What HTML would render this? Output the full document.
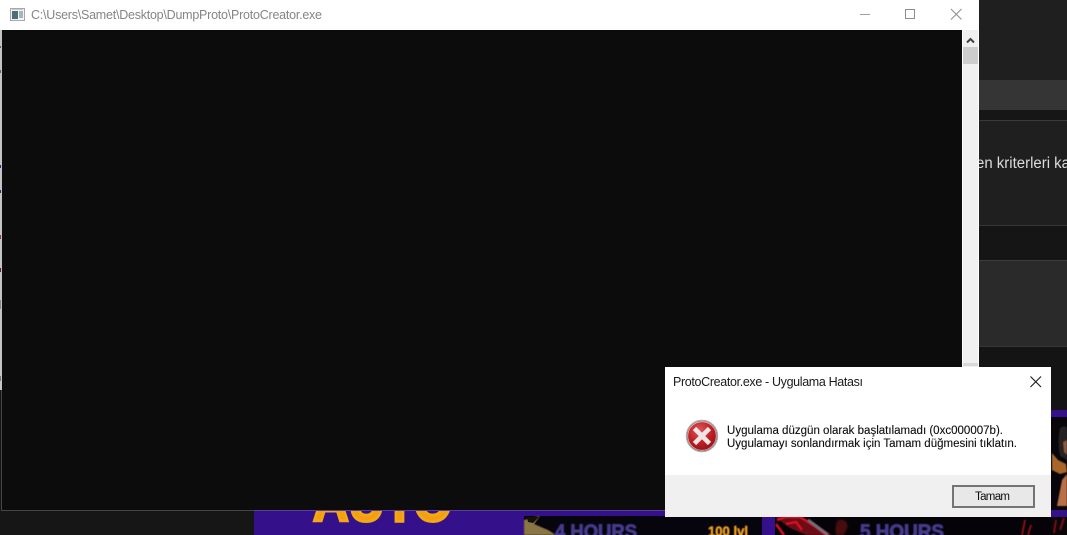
<!DOCTYPE html>
<html><head><meta charset="utf-8">
<style>
html,body{margin:0;padding:0;background:#161616;width:1067px;height:535px;overflow:hidden}
svg{display:block;position:absolute;left:0;top:0}
text{font-family:"Liberation Sans",sans-serif}
</style></head>
<body>
<svg width="1067" height="535" viewBox="0 0 1067 535" xmlns="http://www.w3.org/2000/svg">
<defs>
<radialGradient id="rd" cx="0.42" cy="0.32" r="0.75">
<stop offset="0" stop-color="#dc5a5a"/><stop offset="0.5" stop-color="#bf2226"/><stop offset="1" stop-color="#860f14"/>
</radialGradient>
<linearGradient id="gold" x1="0" y1="0" x2="0" y2="1"><stop offset="0" stop-color="#f5b014"/><stop offset="1" stop-color="#f09a10"/></linearGradient>
<filter id="b"><feGaussianBlur stdDeviation="0.5"/></filter>
<filter id="b1"><feGaussianBlur stdDeviation="0.25"/></filter>
<filter id="b2"><feGaussianBlur stdDeviation="1"/></filter>
<clipPath id="botclip"><rect x="254" y="511" width="813" height="24"/></clipPath>
</defs>

<!-- page background -->
<rect width="1067" height="535" fill="#161616"/>
<rect x="979" y="0" width="88" height="80" fill="#1f1f1f"/>
<rect x="979" y="80" width="88" height="30" fill="#353535"/>
<rect x="979" y="110" width="88" height="10" fill="#161616"/>
<rect x="979" y="120" width="88" height="1" fill="#3a3a3a"/>
<rect x="979" y="121" width="88" height="104" fill="#1f1f1f"/>
<rect x="979" y="225" width="88" height="1" fill="#363636"/>
<rect x="979" y="226" width="88" height="34" fill="#151515"/>
<rect x="979" y="260" width="88" height="1" fill="#3c3c3c"/>
<rect x="979" y="261" width="88" height="85" fill="#2a2a2a"/>
<rect x="979" y="346" width="88" height="1" fill="#363636"/>
<rect x="979" y="347" width="88" height="64" fill="#141414"/>
<text x="976" y="168" font-size="15.5" fill="#dcdcdc" textLength="94" lengthAdjust="spacingAndGlyphs">en kriterleri ka</text>

<!-- bottom promo band -->
<rect x="254" y="510" width="813" height="25" fill="#34118a"/>
<g clip-path="url(#botclip)">
<text x="313" y="521" font-size="56" font-weight="bold" fill="url(#gold)" stroke="#f5a812" stroke-width="3" textLength="139" lengthAdjust="spacingAndGlyphs">AUTO</text>
<rect x="524" y="516" width="238" height="19" fill="#06040c"/>
<path d="M524 520 L540 516 L534 524 L548 530 L556 535 L524 535Z" fill="#8c7444" filter="url(#b)"/>
<path d="M527 517 L539 517 L533 523 L528 522Z" fill="#151008"/>
<text x="555" y="538" font-size="19" font-weight="bold" fill="#443a8c" stroke="#443a8c" stroke-width="0.9" textLength="82" lengthAdjust="spacingAndGlyphs" filter="url(#b)">4 HOURS</text>
<text x="708" y="536" font-size="14" font-weight="bold" fill="#f0a020" stroke="#f0a020" stroke-width="0.5" textLength="40" lengthAdjust="spacingAndGlyphs" filter="url(#b)">100 lvl</text>
<rect x="765" y="517" width="302" height="18" fill="#050308"/>
<rect x="762" y="516" width="13" height="19" fill="#34118a"/>
<path d="M775 517 L790 528 L806 535 L832 535 L812 522 L800 517Z" fill="#6a0c14" filter="url(#b)"/>
<path d="M777 520 L786 517 L800 517 L816 527 L826 535 M786 524 L796 522 L802 530 M776 524 L784 535" fill="none" stroke="#e01020" stroke-width="2.4" filter="url(#b)"/>
<path d="M808 520 L828 535" stroke="#707078" stroke-width="3" fill="none" filter="url(#b)"/>
<path d="M838 520 Q846 518 848 526 L844 535 L836 535 Q834 526 838 520Z" fill="#4a0a10" filter="url(#b2)"/>
<text x="860" y="538" font-size="19" font-weight="bold" fill="#443a8c" stroke="#443a8c" stroke-width="0.9" textLength="84" lengthAdjust="spacingAndGlyphs" filter="url(#b)">5 HOURS</text>
<rect x="1051" y="517" width="16" height="18" fill="#0a0608"/>
<path d="M1025 520 L1022 535 M1031 525 L1028 535" stroke="#8a1018" stroke-width="2" filter="url(#b)"/>
<path d="M1056 520 L1054 533 M1064 518 L1060 530" stroke="#7a0e16" stroke-width="2" filter="url(#b)"/>
</g>

<!-- figure at right -->
<rect x="1051" y="410" width="16" height="107" fill="#34118a"/>
<rect x="1051" y="417" width="16" height="93" fill="#08060a"/>
<path d="M1060 428 Q1067 424 1067 430 L1067 460 L1060 456 Q1057 442 1060 428Z" fill="#262124" filter="url(#b)"/>
<path d="M1063 442 L1067 440 L1067 455 L1064 452Z" fill="#8a5a40" filter="url(#b)"/>
<path d="M1052 453 L1058 460 L1066 464 L1067 472 L1060 474 L1052 470Z" fill="#a8662a" filter="url(#b)"/>
<path d="M1062 480 L1067 474 L1067 506 L1057 506Z" fill="#b87046" filter="url(#b)"/>

<!-- console window -->
<rect x="0" y="0" width="979" height="367" fill="#ffffff"/>
<rect x="0" y="30" width="2" height="360" fill="#c4c4c4"/>
<rect x="0" y="390" width="1" height="121" fill="#161616"/>
<rect x="1" y="390" width="1" height="121" fill="#454545"/>
<g filter="url(#b1)">
<rect x="0" y="46" width="1" height="2" fill="#4a6a60"/>
<rect x="0" y="70" width="1" height="3" fill="#666"/>
<rect x="0" y="165" width="1" height="3" fill="#2a2a80"/>
<rect x="0" y="190" width="1" height="3" fill="#2a2a80"/>
<rect x="0" y="235" width="1" height="4" fill="#804040"/>
<rect x="0" y="268" width="1" height="4" fill="#552030"/>
<rect x="0" y="300" width="1" height="9" fill="#888"/>
<rect x="0" y="376" width="1" height="5" fill="#777"/>
</g>
<rect x="2" y="30" width="960" height="480" fill="#0c0c0c"/>
<rect x="1" y="510" width="253" height="1" fill="#454545"/>
<rect x="254" y="510" width="411" height="1" fill="#5a3f96"/>
<!-- scrollbar -->
<rect x="963" y="30" width="15" height="337" fill="#f0f0f0"/>
<rect x="963" y="363" width="15" height="3" fill="#d8d8d8"/>
<rect x="963" y="47" width="15" height="17" fill="#cdcdcd"/>
<path d="M967 42.5 L970.5 39 L974 42.5" fill="none" stroke="#404040" stroke-width="2"/>

<!-- title bar -->
<rect x="10.5" y="8.5" width="14" height="12" fill="#f4f4f4" stroke="#a8a8a8"/>
<rect x="12" y="11" width="6" height="8" fill="#4a7078"/>
<rect x="19" y="11" width="4" height="7" fill="#a8b4bc"/>
<rect x="12" y="9" width="11" height="1" fill="#c8c8c8"/>
<text x="31" y="19" font-size="12.5" fill="#858585" textLength="291" lengthAdjust="spacing" filter="url(#b1)">C:\Users\Samet\Desktop\DumpProto\ProtoCreator.exe</text>
<rect x="860" y="14" width="10" height="1" fill="#a0a0a0"/>
<rect x="905.5" y="9.5" width="9" height="9" fill="none" stroke="#8c8c8c"/>
<path d="M951 9 L961.5 19.5 M961.5 9 L951 19.5" stroke="#8c8c8c" stroke-width="1" fill="none"/>

<!-- dialog -->
<rect x="665" y="367" width="386" height="150" fill="#ffffff"/>
<rect x="665" y="475" width="386" height="42" fill="#f0f0f0"/>
<text x="673" y="386" font-size="12.5" fill="#1a1a1a" textLength="190" lengthAdjust="spacing" filter="url(#b1)">ProtoCreator.exe - Uygulama Hatası</text>
<path d="M1030.5 376.5 L1041 387 M1041 376.5 L1030.5 387" stroke="#1a1a1a" stroke-width="1.1" fill="none"/>
<circle cx="702" cy="436" r="15.5" fill="url(#rd)" stroke="#a8a8a8" stroke-width="1.4"/>
<circle cx="702" cy="436" r="14.2" fill="none" stroke="#f0d4d4" stroke-width="0.6"/>
<path d="M694.5 428.5 L709.5 443.5 M709.5 428.5 L694.5 443.5" stroke="#eee6e6" stroke-width="4.6" fill="none"/>
<text x="727" y="434" font-size="11.5" fill="#111" stroke="#111" stroke-width="0.12" textLength="276" lengthAdjust="spacingAndGlyphs" filter="url(#b1)">Uygulama düzgün olarak başlatılamadı (0xc000007b).</text>
<text x="727" y="447" font-size="11.5" fill="#111" stroke="#111" stroke-width="0.12" textLength="290" lengthAdjust="spacingAndGlyphs" filter="url(#b1)">Uygulamayı sonlandırmak için Tamam düğmesini tıklatın.</text>
<rect x="953" y="486" width="81" height="21" fill="#e8e8e8" stroke="#747474" stroke-width="2"/>
<text x="975" y="500" font-size="11.5" fill="#111" textLength="35" lengthAdjust="spacing" filter="url(#b1)">Tamam</text>
</svg>
</body></html>
